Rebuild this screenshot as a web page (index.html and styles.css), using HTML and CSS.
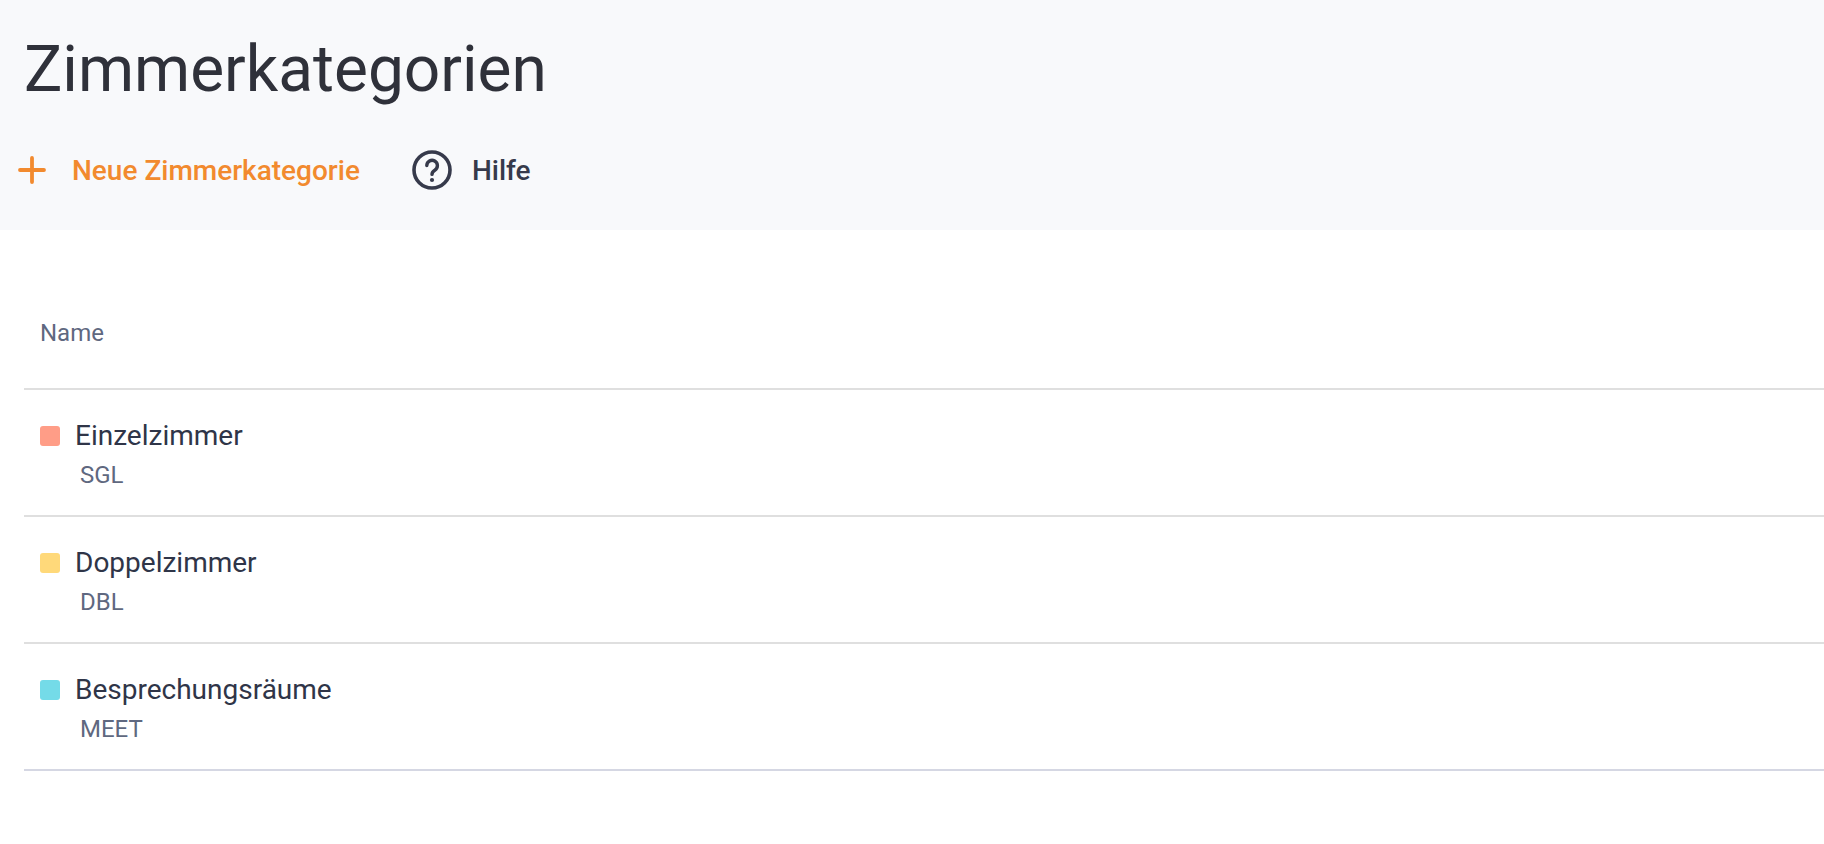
FILE: index.html
```html
<!DOCTYPE html>
<html lang="de">
<head>
<meta charset="utf-8">
<title>Zimmerkategorien</title>
<link rel="stylesheet" href="styles.css">
</head>
<body>
<header class="page-header">
  <h1 class="page-title">Zimmerkategorien</h1>
  <nav class="actions">
    <a class="action action-primary" href="#">
      <svg class="icon-plus" viewBox="0 0 28 28" aria-hidden="true"><path d="M14 2v24M2 14h24" fill="none" stroke="currentColor" stroke-width="3.8" stroke-linecap="round"/></svg>
      <span>Neue Zimmerkategorie</span>
    </a>
    <a class="action action-help" href="#">
      <svg class="icon-help" viewBox="0 0 40 40" aria-hidden="true"><circle cx="20" cy="20" r="18" fill="none" stroke="currentColor" stroke-width="3.6"/><path d="M14.8 15.6a5.3 5.3 0 1 1 8 4.6c-1.8 1.1-2.8 2-2.8 4.2" fill="none" stroke="currentColor" stroke-width="3.4" stroke-linecap="round"/><circle cx="20" cy="30" r="2.1" fill="currentColor"/></svg>
      <span>Hilfe</span>
    </a>
  </nav>
</header>
<main class="table">
  <div class="table-head">Name</div>
  <div class="row">
    <div class="row-title"><i class="swatch swatch-red"></i><span>Einzelzimmer</span></div>
    <div class="row-code">SGL</div>
  </div>
  <div class="row">
    <div class="row-title"><i class="swatch swatch-yellow"></i><span>Doppelzimmer</span></div>
    <div class="row-code">DBL</div>
  </div>
  <div class="row row-last">
    <div class="row-title"><i class="swatch swatch-cyan"></i><span>Besprechungsräume</span></div>
    <div class="row-code">MEET</div>
  </div>
</main>
</body>
</html>
```

FILE: styles.css
```css
* { box-sizing: border-box; }
html, body { margin: 0; padding: 0; }
body { background: #fff; font-family: Roboto, "Liberation Sans", sans-serif; color: #2f3540; height: 844px; overflow: hidden; }

.page-header { height: 230px; background: #f8f9fb; padding: 32px 0 0 24px; }
.page-title { margin: 0; font-size: 64px; line-height: 76px; font-weight: 400; color: #2f313a; }

.actions { display: flex; align-items: center; margin: 42px 0 0 -6px; height: 40px; }
.action { display: flex; align-items: center; text-decoration: none; font-size: 28px; font-weight: 500; }
.action-primary { color: #f28a2e; }
.action-help { color: #363a4b; margin-left: 52px; }
.icon-plus { width: 28px; height: 28px; margin-right: 26px; }
.icon-help { width: 40px; height: 40px; margin-right: 20px; }

.table { margin-left: 24px; }
.table-head { height: 160px; padding: 90px 0 0 16px; font-size: 24px; line-height: 26px; color: #5f6880; border-bottom: 2px solid #dfdfdf; }
.row { height: 127px; padding-top: 29px; border-bottom: 2px solid #dfdfdf; }
.row-last { border-bottom-color: #d5d7e3; }
.row-title { display: flex; align-items: center; padding-left: 16px; font-size: 28px; line-height: 34px; color: #2f3548; }
.swatch { width: 20px; height: 20px; border-radius: 3px; margin-right: 15px; flex: none; }
.swatch-red { background: #ff9d87; }
.swatch-yellow { background: #ffd97a; }
.swatch-cyan { background: #74dbe8; }
.row-code { margin-top: 9px; padding-left: 56px; font-size: 24px; line-height: 26px; color: #5f6880; }
```
